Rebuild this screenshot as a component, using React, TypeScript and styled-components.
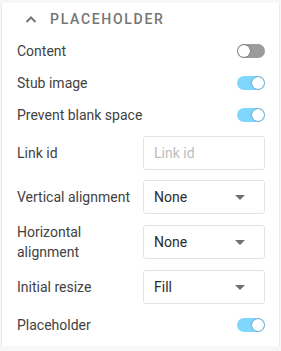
import styled, { createGlobalStyle } from "styled-components"

const GlobalStyle = createGlobalStyle`
  body {
    margin: 0;
    background: #f7f7f7;
    font-family: Roboto, "Noto Sans", sans-serif;
  }
`

const Panel = styled.div`
  margin: 3px 1px 0;
  background: #fff;
  border-left: 1px solid #ebebeb;
  border-right: 1px solid #ebebeb;
  padding-bottom: 5px;
`

const Header = styled.div`
  height: 32px;
  display: flex;
  align-items: center;
  padding-left: 23px;
  gap: 13px;
  color: #757575;
  font-size: 14px;
  font-weight: 500;
  letter-spacing: 1.7px;
  text-transform: uppercase;
`

const Row = styled.div<{ h?: number }>`
  display: grid;
  grid-template-columns: 1fr 122px;
  align-items: center;
  height: ${p => p.h ?? 32}px;
  padding: 0 14px 0 15px;
`

const Label = styled.div`
  color: #424242;
  font-size: 14px;
  line-height: 20px;
`

const ToggleCell = styled.div`
  display: flex;
  justify-content: flex-end;
`

const Track = styled.div<{ on?: boolean }>`
  width: 28px;
  height: 14px;
  border-radius: 7px;
  background: ${p => (p.on ? "#80d6fd" : "#9c9c9c")};
  display: flex;
  align-items: center;
  justify-content: ${p => (p.on ? "flex-end" : "flex-start")};
  padding: 0 1px;
  box-sizing: border-box;
`

const Knob = styled.div`
  width: 12px;
  height: 12px;
  border-radius: 50%;
  background: #fff;
  box-shadow: 0 0 1px 0.5px rgba(0, 0, 0, 0.35);
`

const Field = styled.div`
  height: 34px;
  box-sizing: border-box;
  border: 1px solid #e3e3e3;
  border-radius: 3px;
  display: flex;
  align-items: center;
  justify-content: space-between;
  padding: 0 19px 0 10px;
  font-size: 14px;
  color: #2b2b2b;
`

const Placeholder = styled.span`
  color: #bdbdbd;
`

const Caret = styled.span`
  width: 0;
  height: 0;
  border-left: 5px solid transparent;
  border-right: 5px solid transparent;
  border-top: 5px solid #6e6e6e;
`

const Toggle = ({ on }: { on?: boolean }) => (
  <ToggleCell>
    <Track on={on}>
      <Knob />
    </Track>
  </ToggleCell>
)

const Chevron = () => (
  <svg width="12" height="8" viewBox="0 0 12 8">
    <path d="M1.5 7 L6 2.5 L10.5 7" fill="none" stroke="#757575" strokeWidth="2" />
  </svg>
)

const App = () => {
  return (
    <>
      <GlobalStyle />
      <Panel>
        <Header>
          <Chevron />
          <span>Placeholder</span>
        </Header>
        <Row>
          <Label>Content</Label>
          <Toggle />
        </Row>
        <Row>
          <Label>Stub image</Label>
          <Toggle on />
        </Row>
        <Row>
          <Label>Prevent blank space</Label>
          <Toggle on />
        </Row>
        <Row h={44}>
          <Label>Link id</Label>
          <Field>
            <Placeholder>Link id</Placeholder>
          </Field>
        </Row>
        <Row h={44}>
          <Label>Vertical alignment</Label>
          <Field>
            None
            <Caret />
          </Field>
        </Row>
        <Row h={46}>
          <Label>
            Horizontal
            <br />
            alignment
          </Label>
          <Field>
            None
            <Caret />
          </Field>
        </Row>
        <Row h={44}>
          <Label>Initial resize</Label>
          <Field>
            Fill
            <Caret />
          </Field>
        </Row>
        <Row>
          <Label>Placeholder</Label>
          <Toggle on />
        </Row>
      </Panel>
    </>
  )
}

export default App
